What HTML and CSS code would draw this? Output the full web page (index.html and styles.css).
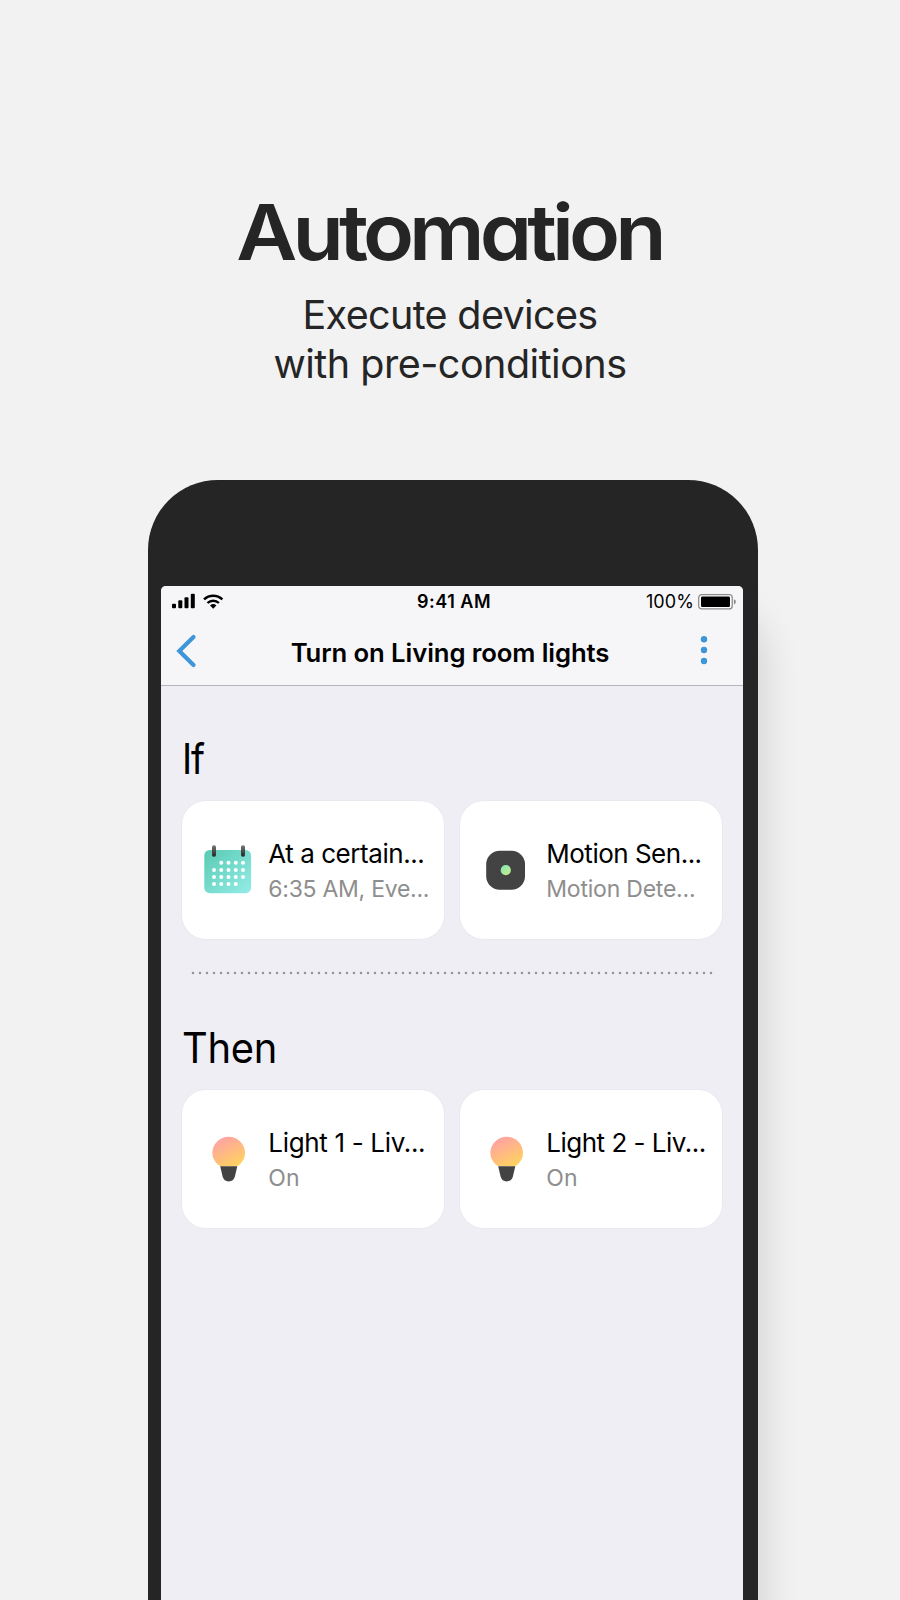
FILE: index.html
```html
<!DOCTYPE html>
<html lang="en">
<head>
<meta charset="utf-8">
<title>Automation</title>
<link rel="stylesheet" href="styles.css">
</head>
<body>
<main class="page">
  <header class="hero">
    <h1 class="hero-title">Automation</h1>
    <p class="hero-sub"><span class="line-one">Execute devices</span><br><span class="line-two">with pre-conditions</span></p>
  </header>
  <section class="phone">
    <div class="screen">
      <div class="status">
        <div class="status-left">
          <svg width="54" height="18" viewBox="0 0 54 18">
            <rect x="0" y="10.700" width="4" height="4.6" rx="1"/><rect x="6.3" y="7.300" width="4" height="8" rx="1"/><rect x="12.5" y="4.300" width="4" height="11" rx="1"/><rect x="18.8" y=".800" width="4" height="14.5" rx="1"/>
            <g fill="none" stroke="#000" stroke-width="2.4"><path d="M32 6.400a13.300 13.300 0 0 1 18.400 0"/><path d="M35.500 10a8.200 8.200 0 0 1 11.400 0"/></g>
            <path d="M41.200 15.700l-3.200-3.200a4.700 4.700 0 0 1 6.400 0z"/>
          </svg>
        </div>
        <div class="status-time">9:41 AM</div>
        <div class="status-right"><span class="percent">100%</span>
          <svg width="38" height="16" viewBox="0 0 38 16">
            <rect x=".7" y=".7" width="33.500" height="14.2" rx="3" fill="#fff" stroke="#8b8b8d" stroke-width="1.3"/>
            <rect x="3" y="2.500" width="29" height="10.6" rx="1.4"/>
            <path d="M35.900 5.200c2.6.8 2.6 4.4 0 5.2z" fill="#8b8b8d"/>
          </svg>
        </div>
      </div>
      <nav class="nav">
        <svg class="back" width="22" height="34" viewBox="0 0 22 34"><path d="M17.500 3L3.300 17 17.500 31" fill="none" stroke="#3e96d9" stroke-width="4.2" stroke-linecap="round" stroke-linejoin="miter"/></svg>
        <h2 class="nav-title">Turn on Living room lights</h2>
        <svg class="more" width="8" height="30" viewBox="0 0 8 30" fill="#3e96d9"><circle cx="4" cy="3.200" r="3.2"/><circle cx="4" cy="14" r="3.2"/><circle cx="4" cy="25" r="3.2"/></svg>
      </nav>
      <div class="content">
        <h3 class="heading heading-if">If</h3>
        <div class="cards">
          <article class="card">
            <svg class="icon" width="56" height="56" viewBox="0 0 56 56">
              <defs>
                <linearGradient id="mint" x1="0" y1="0" x2="1" y2="1"><stop offset="0" stop-color="#58cbb2"/><stop offset="1" stop-color="#94ece8"/></linearGradient>
                <linearGradient id="ring" x1="0" y1="0" x2="0" y2="1"><stop offset="0" stop-color="#777"/><stop offset="1" stop-color="#252525"/></linearGradient>
              </defs>
              <rect x="4.3" y="9" width="46.8" height="43.2" rx="5.5" fill="url(#mint)"/>
              <rect x="12" y="4.3" width="4" height="11.5" rx="1.8" fill="url(#ring)"/><rect x="41" y="4.3" width="4" height="11.5" rx="1.8" fill="url(#ring)"/>
              <g fill="none" stroke="#fff" stroke-width="4" stroke-linecap="round" stroke-dasharray="0 7.25"><path d="M21.25 21.7H43.2"/><path d="M14 28.9H43.2"/><path d="M14 36H43.2"/><path d="M14 43H36"/></g>
            </svg>
            <div class="copy"><div class="name n1">At a certain...</div><div class="state s1">6:35 AM, Eve...</div></div>
          </article>
          <article class="card">
            <svg class="icon" width="56" height="56" viewBox="0 0 56 56">
              <defs><linearGradient id="led" x1="0" y1="0" x2="1" y2="1"><stop offset="0" stop-color="#80e6b7"/><stop offset="1" stop-color="#ccef88"/></linearGradient></defs>
              <rect x="8.2" y="9.7" width="38.8" height="39" rx="13.5" fill="#434343"/><circle cx="27.8" cy="29.2" r="5.1" fill="url(#led)"/>
            </svg>
            <div class="copy"><div class="name n2">Motion Sen...</div><div class="state s2">Motion Dete...</div></div>
          </article>
        </div>
        <svg class="divider" width="522" height="4" viewBox="0 0 522 4"><path d="M2 2H521" fill="none" stroke="#96959b" stroke-width="2.600" stroke-linecap="round" stroke-dasharray="0 7"/></svg>
        <h3 class="heading heading-then">Then</h3>
        <div class="cards">
          <article class="card">
            <svg class="icon" width="56" height="56" viewBox="0 0 56 56">
              <defs><linearGradient id="glow" x1=".2" y1="0" x2=".75" y2="1"><stop offset=".1" stop-color="#ffa4a0"/><stop offset="1" stop-color="#ffd35f"/></linearGradient></defs>
              <path d="M20.2 36.2C15.5 33.2 12.4 28.500 12.400 23A16.300 16.300 0 0 1 45 23C45 28.500 42 33.200 37.300 36.200Z" fill="url(#glow)"/>
              <path d="M20.200 36.200H37.300L34.900 46.500C34.100 49.700 31.800 51.400 28.700 51.400S23.400 49.700 22.600 46.500Z" fill="#434343"/>
            </svg>
            <div class="copy"><div class="name n3">Light 1 - Liv...</div><div class="state s3">On</div></div>
          </article>
          <article class="card">
            <svg class="icon" width="56" height="56" viewBox="0 0 56 56">
              <path d="M20.2 36.2C15.5 33.2 12.4 28.500 12.400 23A16.300 16.300 0 0 1 45 23C45 28.500 42 33.200 37.300 36.200Z" fill="url(#glow)"/>
              <path d="M20.200 36.200H37.300L34.900 46.500C34.100 49.700 31.800 51.400 28.700 51.400S23.400 49.700 22.600 46.500Z" fill="#434343"/>
            </svg>
            <div class="copy"><div class="name n4">Light 2 - Liv...</div><div class="state s3">On</div></div>
          </article>
        </div>
      </div>
    </div>
  </section>
</main>
</body>
</html>
```
FILE: styles.css
```css
* { box-sizing: border-box; }
body { margin: 0; background: #f2f2f2; font-family: Inter, "Liberation Sans", sans-serif; color: #000; }
h1, h2, h3, p { margin: 0; font-weight: 400; }
svg { display: block; flex: none; }
.page { height: 1600px; overflow: hidden; padding-top: 192px; }
.hero { height: 288px; text-align: center; color: #252525; }
.hero-title { margin-right: 2px; font-size: 77px; line-height: 80px; font-weight: 620; letter-spacing: -4.500px; font-feature-settings: "cv11" 1; white-space: nowrap; transform: scaleX(1.09); }
.hero-sub { margin-top: 19px; font-size: 39.5px; line-height: 49px; }
.line-one { letter-spacing: -.65px; }
.line-two { letter-spacing: -.5px; }
.phone { width: 610px; height: 1220px; margin-left: 148px; padding: 105.500px 15px 0 13px; background: #252525; border-radius: 70px 70px 0 0; box-shadow: 18px 112px 36px -10px rgba(0,0,0,.12); }
.screen { height: 1110px; background: #efeef5; border-radius: 5px 5px 0 0; overflow: hidden; }
.status { height: 32px; display: grid; grid-template-columns: 1fr auto 1fr; align-items: center; padding: 0 7px 0 11px; background: #f6f6f9; font-size: 18px; line-height: 32px; }
.status-time { font-weight: 600; letter-spacing: .5px; }
.status-right { display: flex; justify-content: flex-end; align-items: center; gap: 4px; }
.percent { letter-spacing: .1px; }
.nav { height: 68.500px; display: flex; align-items: center; justify-content: space-between; padding: 0 35px 0 15px; background: #f6f6f9; border-bottom: 1.500px solid #b5b5b9; }
.nav-title { font-size: 25.700px; font-weight: 600; padding: 2.500px 0 0 2px; letter-spacing: -.1px; white-space: nowrap; }
.content { padding: 48px 20.500px 0 21px; }
.heading { font-size: 42px; line-height: 50px; letter-spacing: -.300px; transform: scaleX(.95); transform-origin: left; }
.heading-if { letter-spacing: -1.200px; transform: scaleX(.9); }
.cards { display: grid; grid-template-columns: 262px 262px; gap: 16px; margin-top: 17px; }
.card { height: 138px; padding: 34.500px 0 0 18px; display: flex; gap: 12.300px; background: #fff; border-radius: 24px; box-shadow: 0 0 1px 1px rgba(0,0,0,.025); }
.icon { margin-top: 5.500px; }
.copy { white-space: nowrap; }
.name { font-size: 26px; line-height: 36px; }
.state { font-size: 23px; line-height: 34px; color: #8e8e8e; }
.n1 { letter-spacing: -.45px; }
.n2 { letter-spacing: -.500px; }
.n3 { letter-spacing: -.330px; }
.n4 { letter-spacing: -.500px; }
.s1 { letter-spacing: -.270px; }
.s2 { letter-spacing: -.220px; }
.divider { margin: 31.500px 0 0 9px; }
.heading-then { margin-top: 48.500px; }
```
